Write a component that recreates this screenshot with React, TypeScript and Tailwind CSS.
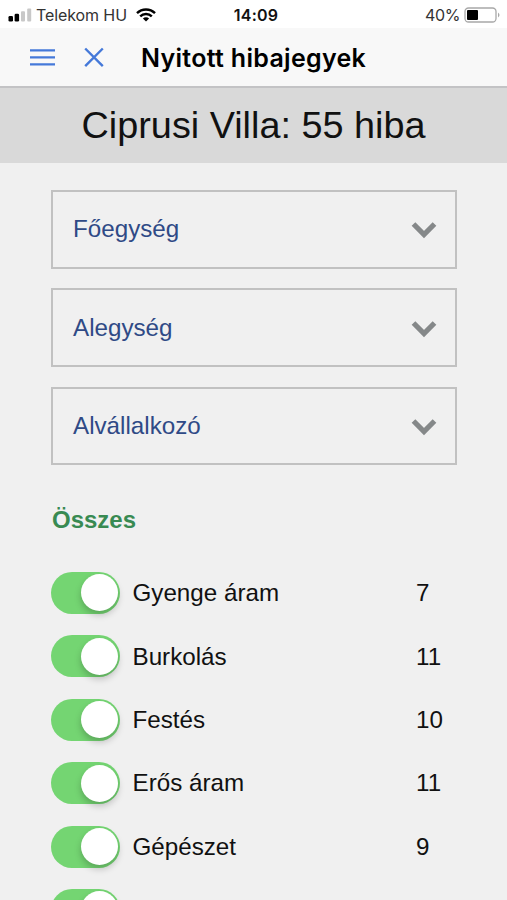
import React from "react";

const filters = ["Főegység", "Alegység", "Alvállalkozó"];

const trades = [
  { name: "Gyenge áram", count: "7" },
  { name: "Burkolás", count: "11" },
  { name: "Festés", count: "10" },
  { name: "Erős áram", count: "11" },
  { name: "Gépészet", count: "9" },
  { name: "Takarítás", count: "" },
];

function StatusBar() {
  return (
    <div className="grid h-7 shrink-0 grid-cols-[1fr_auto_1fr] items-center bg-white pl-2 pr-[6px] pt-[2px] font-['Inter',sans-serif] text-[16px] leading-none text-[#333]">
      <div className="flex items-center">
        <svg className="-mt-px" width="24" height="14" viewBox="0 0 24 14">
          <rect x="0.5" y="8" width="4.5" height="5.5" rx="1.3" fill="#000" />
          <rect x="6.6" y="5.8" width="4.5" height="7.7" rx="1.3" fill="#000" />
          <rect x="13" y="3.2" width="4" height="10.3" rx="1" fill="#c8c8c8" />
          <rect x="19.2" y="0.6" width="4" height="12.9" rx="1" fill="#c8c8c8" />
        </svg>
        <span className="ml-[4px] whitespace-nowrap tracking-[-0.1px]">Telekom HU</span>
        <svg className="-mt-px ml-[9px]" width="20" height="14" viewBox="0 0 20 14" fill="none" stroke="#000" strokeWidth="2.4">
          <path d="M1 5.2a12.8 12.8 0 0 1 18 0" />
          <path d="M4.2 8.4a8.2 8.2 0 0 1 11.6 0" />
          <path d="M10 13.6 6.9 10.5a4.4 4.4 0 0 1 6.2 0Z" fill="#000" stroke="none" />
        </svg>
      </div>
      <span className="pl-[3px] text-[16px] font-semibold tracking-[0.2px] text-[#111]">14:09</span>
      <div className="flex items-center justify-end">
        <span className="tracking-[-0.4px]">40%</span>
        <svg className="-mt-px ml-1" width="37" height="16" viewBox="0 0 37 16">
          <rect x="1" y="1" width="31" height="14" rx="3.5" fill="#fff" stroke="#a8a8a8" strokeWidth="1.3" />
          <rect x="3" y="3" width="11" height="10" rx="1" fill="#000" />
          <path d="M34 5.5q3 2.5 0 5z" fill="#a8a8a8" />
        </svg>
      </div>
    </div>
  );
}

function NavBar() {
  return (
    <header className="flex h-[60px] shrink-0 items-center border-b-2 border-[#c3c3c5] bg-[#f8f8f8] pl-[30px]">
      <svg width="25" height="18" viewBox="0 0 25 18" stroke="#4579d9" strokeWidth="2.3">
        <path d="M0 2.3h25M0 9.3h25M0 16.3h25" />
      </svg>
      <svg className="ml-[29px]" width="20" height="20" viewBox="0 0 20 20" stroke="#4579d9" strokeWidth="2.4">
        <path d="M1.2 1.5l17.6 17.6M18.8 1.5 1.2 19.1" />
      </svg>
      <h1 className="ml-[37px] mt-[2px] whitespace-nowrap font-['Inter',sans-serif] text-[25px] font-semibold leading-none tracking-[0.3px] text-black">
        Nyitott hibajegyek
      </h1>
    </header>
  );
}

function Select({ label }: { label: string }) {
  return (
    <button className="flex h-[78.5px] w-full items-center justify-between border-2 border-[#c1c1c1] pl-5 pr-[18px] text-[24.2px] text-[#2f4a86]">
      <span className="pt-[0.5px]">{label}</span>
      <svg className="mt-[2px]" width="26" height="18" viewBox="0 0 26 18" fill="none" stroke="#858889" strokeWidth="5.2">
        <path d="M2.5 3 13 13.5 23.5 3" />
      </svg>
    </button>
  );
}

function Toggle() {
  return (
    <span className="flex h-[42px] w-[69px] shrink-0 items-center justify-end rounded-full bg-[#74d572] pr-[2px]">
      <span className="size-[37px] rounded-full bg-white shadow-[0_4px_7px_rgba(0,0,0,0.22)]" />
    </span>
  );
}

export default function App() {
  return (
    <div className="flex h-[900px] w-[507px] flex-col overflow-hidden bg-[#f0f0f0] font-['Liberation_Sans',Arial,sans-serif] text-[#111]">
      <StatusBar />
      <NavBar />
      <h2 className="flex h-[75px] shrink-0 items-center justify-center bg-[#d9d9d9] text-[37.8px] leading-none">
        Ciprusi Villa: 55 hiba
      </h2>
      <main className="px-[51px] pt-[27px]">
        <div className="flex w-[406px] flex-col gap-[19.9px]">
          {filters.map((label) => (
            <Select key={label} label={label} />
          ))}
        </div>
        <h3 className="mt-[40.7px] pl-px text-[24px] font-bold leading-[28px] text-[#388a52]">Összes</h3>
        <ul className="mt-[38px] flex flex-col gap-[21.4px] text-[24.2px] leading-none">
          {trades.map(({ name, count }) => (
            <li key={name} className="flex h-[42px] items-center">
              <Toggle />
              <span className="ml-[12.5px] w-[283.5px] pt-[0.5px]">{name}</span>
              <span className="pt-[0.5px]">{count}</span>
            </li>
          ))}
        </ul>
      </main>
    </div>
  );
}
